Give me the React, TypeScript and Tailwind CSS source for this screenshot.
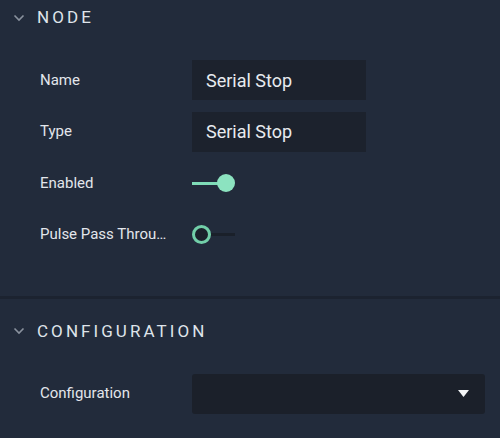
import React from "react";

function Chevron() {
  return (
    <svg width="12" height="8" viewBox="0 0 12 8" className="shrink-0">
      <path d="M1.5 1.5 L6 6 L10.5 1.5" fill="none" stroke="#8a929e" strokeWidth="1.6" />
    </svg>
  );
}

function Header({ title }: { title: string }) {
  return (
    <div className="flex h-[35px] items-center">
      <div className="flex w-[37px] justify-start pl-[13px]">
        <Chevron />
      </div>
      <span className="text-[17px] leading-none tracking-[0.18em] text-[#dfe4ea]">{title}</span>
    </div>
  );
}

function Row({ label, children }: { label: string; children: React.ReactNode }) {
  return (
    <div className="flex h-10 items-center">
      <div className="w-[192px] shrink-0 truncate pl-10 pr-[24px] text-[15px] text-[#e3e6eb]">{label}</div>
      {children}
    </div>
  );
}

function TextBox({ value }: { value: string }) {
  return (
    <div className="flex h-10 w-[174px] items-center bg-[#1c222d] pl-[14px] text-[18px] text-[#e8ebef]">
      {value}
    </div>
  );
}

function Toggle({ on }: { on: boolean }) {
  if (on) {
    return (
      <div className="flex h-10 items-center">
        <div className="h-[3px] w-[28px] bg-[#7fdcb8]" />
        <div className="-ml-[3px] h-[18px] w-[18px] rounded-full bg-[#8ce3c0]" />
      </div>
    );
  }
  return (
    <div className="flex h-10 items-center">
      <div className="h-[19px] w-[19px] rounded-full border-[3px] border-[#72cfa9] bg-[#1b212b]" />
      <div className="h-[3px] w-[24px] bg-[#1a202a]" />
    </div>
  );
}

export default function App() {
  return (
    <div className="h-[438px] w-[500px] overflow-hidden bg-[#222b3b]" style={{ fontFamily: "Roboto, 'Noto Sans', sans-serif" }}>
      <div className="flex flex-col pb-[41px]">
        <Header title="NODE" />
        <div className="mt-[25px] flex flex-col gap-[11.5px]">
          <Row label="Name">
            <TextBox value="Serial Stop" />
          </Row>
          <Row label="Type">
            <TextBox value="Serial Stop" />
          </Row>
          <Row label="Enabled">
            <Toggle on />
          </Row>
          <Row label="Pulse Pass Through">
            <Toggle on={false} />
          </Row>
        </div>
      </div>
      <div className="h-[3px] bg-[#1c2330]" />
      <div className="flex flex-col pt-[15px]">
        <Header title="CONFIGURATION" />
        <div className="mt-[25px] pr-[15px]">
          <Row label="Configuration">
            <div className="flex h-10 flex-1 items-center justify-end rounded-[3px] bg-[#1b202a] pr-[16px]">
              <svg width="11" height="7" viewBox="0 0 11 7">
                <path d="M0 0 H11 L5.5 7 Z" fill="#f4f5f7" />
              </svg>
            </div>
          </Row>
        </div>
      </div>
    </div>
  );
}
